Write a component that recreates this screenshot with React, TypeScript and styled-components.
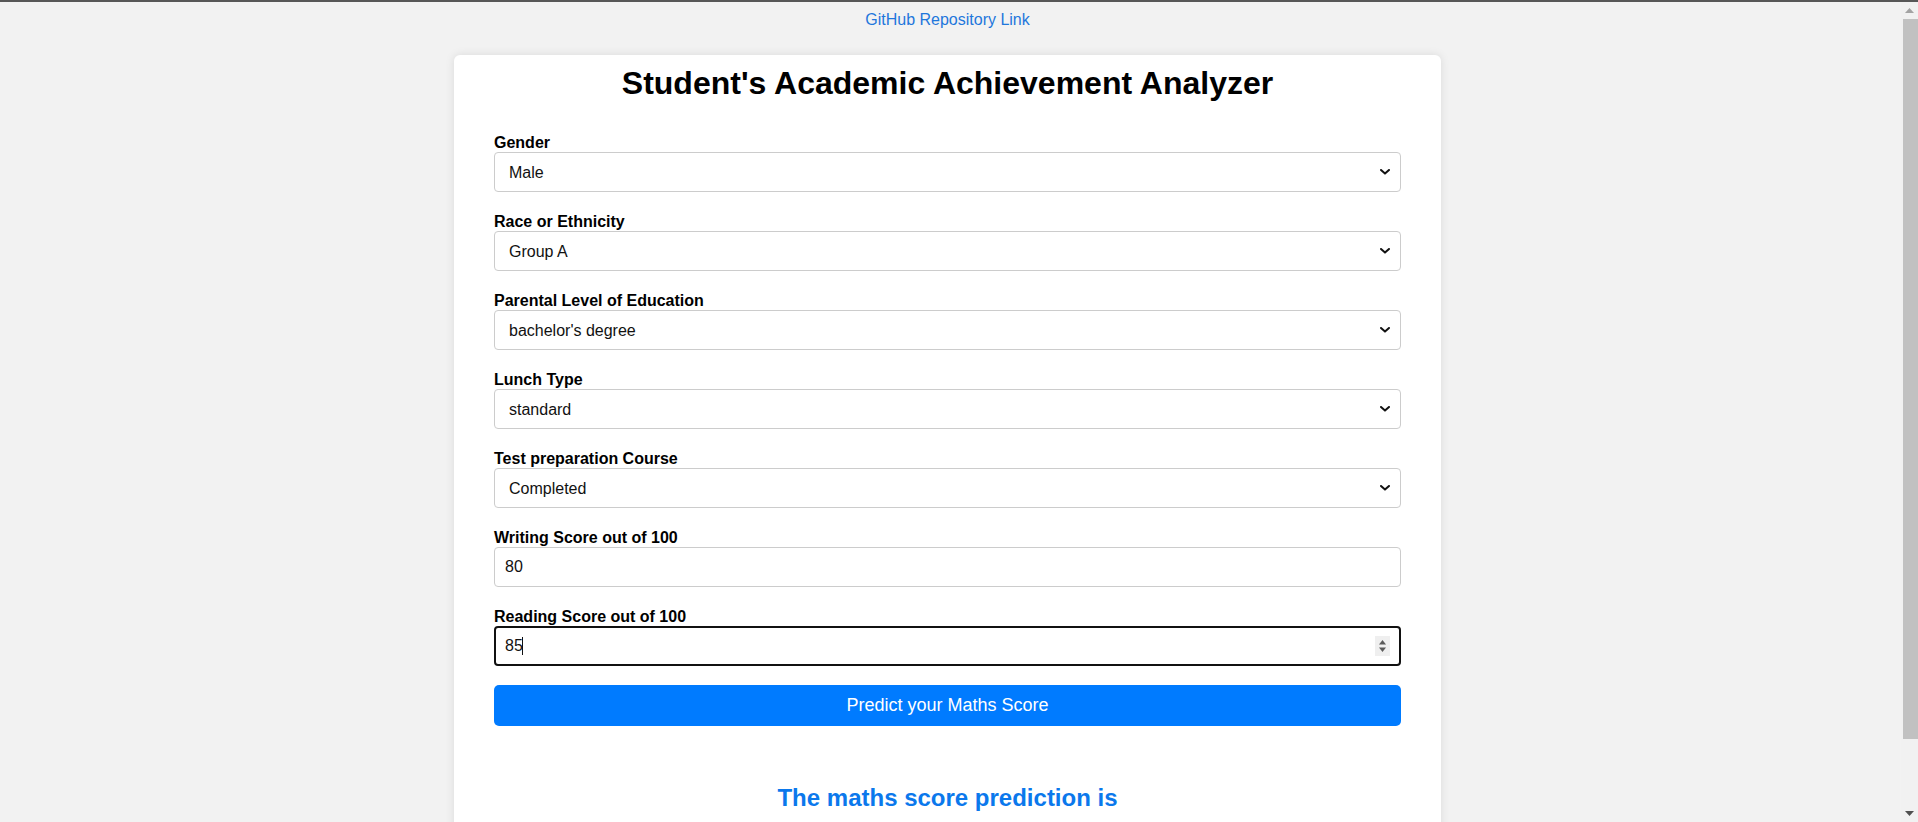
import React, { useState } from "react";
import styled, { createGlobalStyle } from "styled-components";

const GlobalStyle = createGlobalStyle`
  html, body {
    margin: 0;
    padding: 0;
  }
  body {
    background: #f2f2f2;
    font-family: "Liberation Sans", Arial, Helvetica, sans-serif;
    color: #000;
  }
  * { box-sizing: border-box; }
`;

const TopRule = styled.div`
  height: 2px;
  background: #575757;
`;

const Page = styled.div`
  display: flex;
  flex-direction: column;
  align-items: center;
  margin-right: 23px;
  padding: 0 0 34px;
`;

const ScrollTrack = styled.div`
  position: fixed;
  top: 2px;
  right: 0;
  bottom: 0;
  width: 17px;
  background: #f1f1f1;
  display: flex;
  flex-direction: column;
  align-items: center;
`;

const ScrollArrow = styled.div`
  height: 17px;
  width: 17px;
  display: flex;
  align-items: center;
  justify-content: center;
`;

const ScrollThumb = styled.div<{ $size: number }>`
  flex: 0 0 ${(p) => p.$size}px;
  align-self: stretch;
  margin: 0 0 0 2px;
  background: #c1c1c1;
`;

const ScrollSpacer = styled.div`
  flex: 1;
`;

const Header = styled.div`
  padding: 9px 0 0;
  height: 53px;
  text-align: center;
`;

const RepoLink = styled.a`
  font-size: 16px;
  line-height: 18px;
  color: #1f77dc;
  text-decoration: none;
`;

const Card = styled.main`
  width: 987px;
  background: #ffffff;
  border-radius: 6px;
  box-shadow: 0 0 10px rgba(0, 0, 0, 0.1);
  padding: 10px 40px 60px;
`;

const Title = styled.h1`
  margin: 0 0 31px;
  font-size: 32px;
  line-height: 37px;
  font-weight: 700;
  text-align: center;
`;

const Form = styled.form`
  display: flex;
  flex-direction: column;
`;

const Field = styled.div`
  display: flex;
  flex-direction: column;
  margin-bottom: 20px;
`;

const Label = styled.label`
  font-size: 16px;
  line-height: 19px;
  font-weight: 700;
  color: #000;
`;

const FieldBox = styled.div`
  position: relative;
`;

const Select = styled.select`
  height: 40px;
  width: 100%;
  padding: 0 36px 0 14px;
  font-family: inherit;
  font-size: 16px;
  color: #111;
  background: #fff;
  border: 1px solid #cccccc;
  border-radius: 4px;
  outline: none;
  appearance: none;
  -webkit-appearance: none;
`;

const Chevron = styled.svg`
  position: absolute;
  right: 11px;
  top: 17px;
  pointer-events: none;
`;

const Input = styled.input<{ $focused?: boolean }>`
  height: 40px;
  width: 100%;
  padding: 0 ${(p) => (p.$focused ? "9px" : "10px")};
  font-family: inherit;
  font-size: 16px;
  color: #111;
  background: #fff;
  border: ${(p) => (p.$focused ? "2px solid #111" : "1px solid #cccccc")};
  border-radius: 4px;
  outline: none;
  -moz-appearance: textfield;
  &::-webkit-outer-spin-button,
  &::-webkit-inner-spin-button {
    -webkit-appearance: none;
    margin: 0;
  }
`;

const Caret = styled.span`
  position: absolute;
  left: 28px;
  top: 11px;
  width: 1px;
  height: 18px;
  background: #111;
  pointer-events: none;
`;

const Spinner = styled.span`
  position: absolute;
  right: 11px;
  top: 10px;
  width: 15px;
  height: 20px;
  background: #efefef;
  display: flex;
  align-items: center;
  justify-content: center;
  pointer-events: none;
`;

const SubmitButton = styled.button`
  height: 41px;
  width: 100%;
  margin-top: -1px;
  border: none;
  border-radius: 5px;
  background: #007bff;
  color: #fff;
  font-family: inherit;
  font-size: 18px;
  cursor: pointer;
`;

const Result = styled.h2`
  margin: 58px 0 0;
  font-size: 24px;
  line-height: 28px;
  font-weight: 700;
  color: #0b78ec;
  text-align: center;
`;

type Opt = { id: string; label: string; value: string; options: string[] };

const selects: Opt[] = [
  { id: "gender", label: "Gender", value: "Male", options: ["Male", "Female"] },
  {
    id: "ethnicity",
    label: "Race or Ethnicity",
    value: "Group A",
    options: ["Group A", "Group B", "Group C", "Group D", "Group E"],
  },
  {
    id: "parental",
    label: "Parental Level of Education",
    value: "bachelor's degree",
    options: [
      "associate's degree",
      "bachelor's degree",
      "high school",
      "master's degree",
      "some college",
      "some high school",
    ],
  },
  { id: "lunch", label: "Lunch Type", value: "standard", options: ["free/reduced", "standard"] },
  {
    id: "prep",
    label: "Test preparation Course",
    value: "Completed",
    options: ["None", "Completed"],
  },
];

export default function App() {
  const [values, setValues] = useState<Record<string, string>>(
    Object.fromEntries(selects.map((s) => [s.id, s.value]))
  );
  const [writing, setWriting] = useState("80");
  const [reading, setReading] = useState("85");

  return (
    <>
      <GlobalStyle />
      <TopRule />
      <Page>
        <Header>
          <RepoLink href="#">GitHub Repository Link</RepoLink>
        </Header>
        <Card>
          <Title>Student's Academic Achievement Analyzer</Title>
          <Form onSubmit={(e) => e.preventDefault()}>
            {selects.map((s) => (
              <Field key={s.id}>
                <Label htmlFor={s.id}>{s.label}</Label>
                <FieldBox>
                  <Select
                    id={s.id}
                    value={values[s.id]}
                    onChange={(e) => setValues({ ...values, [s.id]: e.target.value })}
                  >
                    {s.options.map((o) => (
                      <option key={o} value={o}>
                        {o}
                      </option>
                    ))}
                  </Select>
                  <Chevron width="10" height="6" viewBox="0 0 10 6">
                    <path
                      d="M1 1 L5 4.6 L9 1"
                      fill="none"
                      stroke="#111"
                      strokeWidth="2"
                      strokeLinecap="round"
                      strokeLinejoin="round"
                    />
                  </Chevron>
                </FieldBox>
              </Field>
            ))}
            <Field>
              <Label htmlFor="writing">Writing Score out of 100</Label>
              <Input
                id="writing"
                type="number"
                value={writing}
                onChange={(e) => setWriting(e.target.value)}
              />
            </Field>
            <Field>
              <Label htmlFor="reading">Reading Score out of 100</Label>
              <FieldBox>
                <Input
                  id="reading"
                  type="number"
                  $focused
                  value={reading}
                  onChange={(e) => setReading(e.target.value)}
                />
                <Caret />
                <Spinner>
                  <svg width="9" height="16" viewBox="0 0 9 16">
                    <path d="M4.5 2 L8 6.5 H1 Z" fill="#5a5a5a" />
                    <path d="M4.5 14 L8 9.5 H1 Z" fill="#5a5a5a" />
                  </svg>
                </Spinner>
              </FieldBox>
            </Field>
            <SubmitButton type="submit">Predict your Maths Score</SubmitButton>
          </Form>
          <Result>The maths score prediction is</Result>
        </Card>
      </Page>
      <ScrollTrack aria-hidden>
        <ScrollArrow>
          <svg width="9" height="5" viewBox="0 0 9 5">
            <path d="M4.5 0 L9 5 H0 Z" fill="#a3a3a3" />
          </svg>
        </ScrollArrow>
        <ScrollThumb $size={720} />
        <ScrollSpacer />
        <ScrollArrow>
          <svg width="9" height="5" viewBox="0 0 9 5">
            <path d="M0 0 H9 L4.5 5 Z" fill="#505050" />
          </svg>
        </ScrollArrow>
      </ScrollTrack>
    </>
  );
}
